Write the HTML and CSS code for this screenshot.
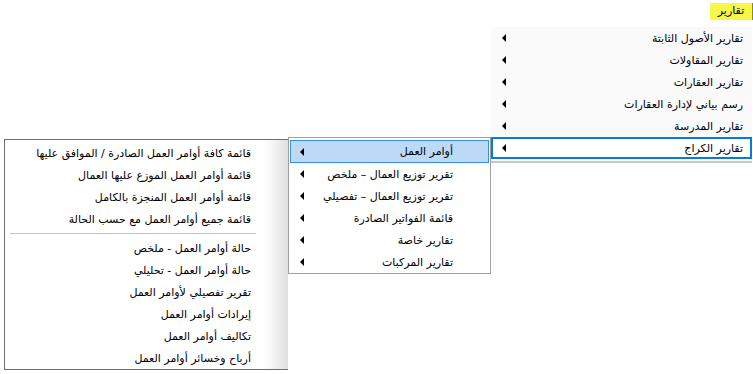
FILE: index.html
```html
<!DOCTYPE html>
<html lang="ar">
<head>
    <meta charset="UTF-8">
    <meta name="viewport" content="width=device-width, initial-scale=1.0">
    <title>تقارير</title>
    <link rel="stylesheet" href="styles.css">
</head>
<body>
    <div class="topbar">
        <span class="tab">تقارير</span>
    </div>

    <div class="main-menu">
        <div class="item"><span>تقارير الأصول الثابتة</span><i class="arrow"></i></div>
        <div class="item"><span>تقارير المقاولات</span><i class="arrow"></i></div>
        <div class="item"><span>تقارير العقارات</span><i class="arrow"></i></div>
        <div class="item"><span>رسم بياني لإدارة العقارات</span><i class="arrow"></i></div>
        <div class="item"><span>تقارير المدرسة</span><i class="arrow"></i></div>
        <div class="item active"><span>تقارير الكراج</span><i class="arrow"></i></div>
    </div>

    <div class="popup sub-menu">
        <div class="item hover"><span>أوامر العمل</span><i class="arrow"></i></div>
        <div class="item"><span>تقرير توزيع العمال – ملخص</span><i class="arrow"></i></div>
        <div class="item"><span>تقرير توزيع العمال – تفصيلي</span><i class="arrow"></i></div>
        <div class="item"><span>قائمة الفواتير الصادرة</span><i class="arrow"></i></div>
        <div class="item"><span>تقارير خاصة</span><i class="arrow"></i></div>
        <div class="item"><span>تقارير المركبات</span><i class="arrow"></i></div>
    </div>

    <div class="popup leaf-menu">
        <div class="item"><span>قائمة كافة أوامر العمل الصادرة / الموافق عليها</span></div>
        <div class="item"><span>قائمة أوامر العمل الموزع عليها العمال</span></div>
        <div class="item"><span>قائمة أوامر العمل المنجزة بالكامل</span></div>
        <div class="item"><span>قائمة جميع أوامر العمل مع حسب الحالة</span></div>
        <div class="sep"></div>
        <div class="item"><span>حالة أوامر العمل - ملخص</span></div>
        <div class="item"><span>حالة أوامر العمل - تحليلي</span></div>
        <div class="item"><span>تقرير تفصيلي لأوامر العمل</span></div>
        <div class="item"><span>إيرادات أوامر العمل</span></div>
        <div class="item"><span>تكاليف أوامر العمل</span></div>
        <div class="item"><span>أرباح وخسائر أوامر العمل</span></div>
    </div>
</body>
</html>
```

FILE: styles.css
```css
body {
    margin: 0;
    padding: 0;
    width: 753px;
    height: 374px;
    position: relative;
    overflow: hidden;
    background-color: white;
    color: black;
    font-family: "DejaVu Sans", Tahoma, sans-serif;
    font-size: 11px;
    direction: rtl;
}

.topbar {
    display: flex;
    justify-content: flex-start;
    padding-top: 3px;
    height: 22px;
    box-sizing: border-box;
}

.tab {
    width: 43px;
    box-sizing: border-box;
    text-align: center;
    background-color: #f7f74a;
    border-right: 1px solid #8a8a20;
    height: 17px;
    line-height: 16px;
}

.item {
    display: flex;
    align-items: center;
    justify-content: space-between;
    height: 22px;
    box-sizing: border-box;
    white-space: nowrap;
}

.arrow {
    width: 0;
    height: 0;
    border-top: 4px solid transparent;
    border-bottom: 4px solid transparent;
    border-right: 4px solid black;
}

/* menu under the tab */
.main-menu {
    width: 261px;
    margin-right: 1px;
    margin-top: 5px;
    background-color: #fafafa;
    border-bottom: 2px solid #c8c8c8;
    padding-bottom: 2px;
}

.main-menu .item {
    padding: 0 9px 0 11px;
}

.main-menu .item.active {
    border: 2px solid #0a7ad8;
    background-color: white;
    padding: 0 7px 0 9px;
}

/* flyout menus */
.popup {
    position: absolute;
    background-color: white;
    box-sizing: border-box;
    padding: 2px 1px;
}

.sub-menu {
    top: 137px;
    left: 288px;
    width: 203px;
    height: 137px;
    border: 1px solid #a0a0a0;
}

.sub-menu .item {
    padding: 0 36px 0 10px;
}

.sub-menu .item.hover {
    background-color: #bcd9f5;
    border: 1px solid #3a8ee0;
    padding: 0 35px 0 9px;
    height: 23px;
}

.leaf-menu {
    top: 139px;
    left: 4px;
    width: 284px;
    height: 231px;
    border: 1px solid #6e6e6e;
    border-right: none;
    background: linear-gradient(to right, white 258px, #f2f2f2 270px, #dedede 284px);
}

.leaf-menu .item {
    justify-content: flex-start;
    padding: 0 36px 0 10px;
}

.sep {
    height: 1px;
    background-color: #c4c4c4;
    margin: 3px 31px 3px 4px;
}
```
